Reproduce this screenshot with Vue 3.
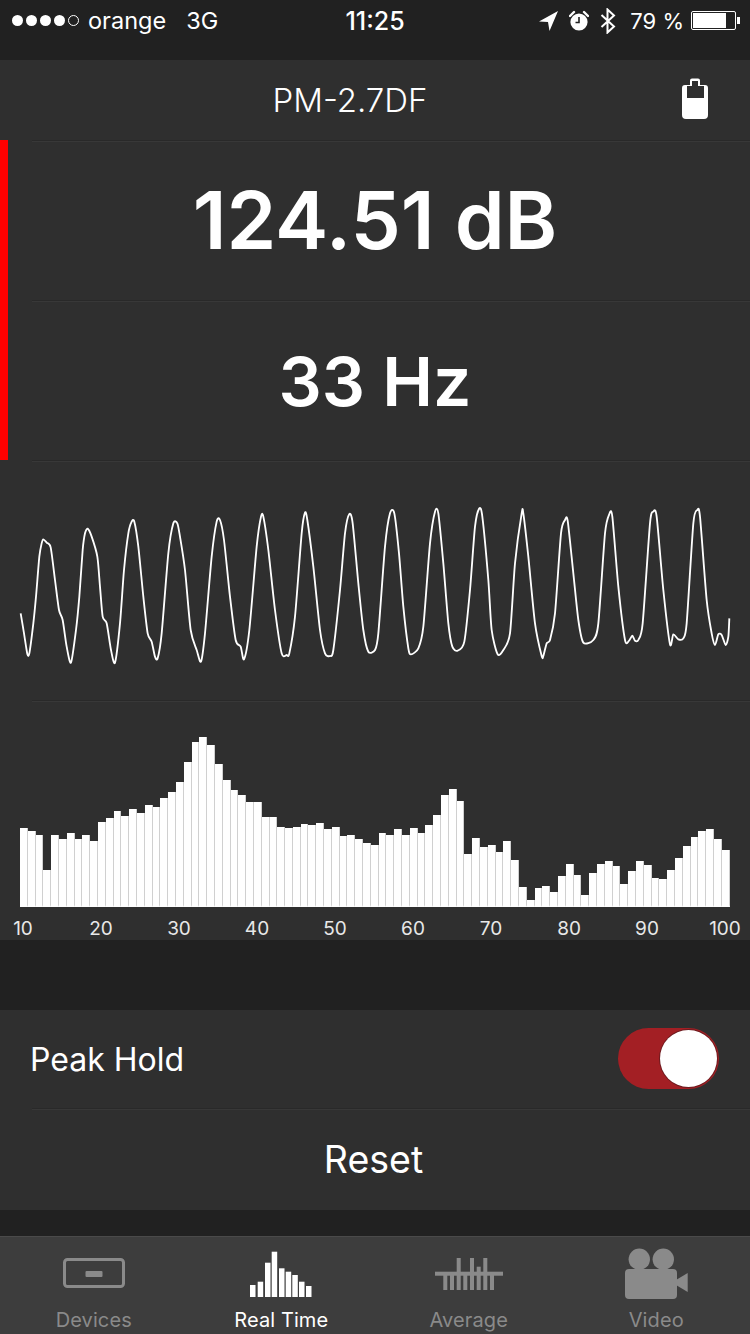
<template>
  <div class="page">
    <!-- status bar -->
    <div class="status-bar">
      <div class="status-left">
        <div class="dots">
          <i v-for="n in 4" :key="n" class="dot"></i>
          <i class="dot empty"></i>
        </div>
        <span class="carrier">orange</span>
        <span class="net">3G</span>
      </div>
      <div class="status-time">11:25</div>
      <div class="status-right">
        <svg class="ic-loc" width="19" height="20" viewBox="0 0 19 20">
          <path d="M19 0 L0 10.5 L9 11 L10.5 20 Z" fill="#fff" />
        </svg>
        <svg class="ic-alarm" width="20" height="22" viewBox="0 0 20 22">
          <circle cx="10" cy="12" r="8.6" fill="#fff" />
          <path d="M1 6 L5 2 M15 2 L19 6" stroke="#fff" stroke-width="2.4" stroke-linecap="round" />
          <path d="M10 7 V12.5 H6.5" stroke="#212121" stroke-width="1.6" fill="none" />
        </svg>
        <svg class="ic-bt" width="16" height="26" viewBox="0 0 16 26">
          <path d="M1.5 7 L14 18.5 L7.5 24.5 V1.5 L14 7.5 L1.5 19" stroke="#fff" stroke-width="2" fill="none" />
        </svg>
        <span class="batt-text">79 %</span>
        <div class="batt">
          <div class="batt-fill"></div>
        </div>
        <div class="batt-nub"></div>
      </div>
    </div>

    <!-- nav -->
    <div class="nav">
      <span class="nav-title">PM-2.7DF</span>
      <svg class="nav-batt" width="26" height="41" viewBox="0 0 26 41">
        <path d="M8 7 V2.5 Q8 0.5 10 0.5 H16 Q18 0.5 18 2.5 V7 H23 Q26 7 26 10 V37 Q26 41 22 41 H4 Q0 41 0 37 V10 Q0 7 3 7 Z" fill="#fff" />
        <rect x="5" y="8" width="17" height="12" fill="#2f2f2f" />
        <rect x="10" y="3" width="6" height="6" fill="#2f2f2f" />
      </svg>
    </div>

    <!-- readouts -->
    <div class="readouts">
      <div class="readout">
        <span class="level">124.51 dB</span>
      </div>
      <div class="readout">
        <span class="freq">33 Hz</span>
      </div>
    </div>

    <!-- waveform -->
    <div class="wave">
      <svg width="750" height="240" viewBox="0 -90 2250 720">
        <path :d="wavePath" fill="none" stroke="#fff" stroke-width="5.5" stroke-linejoin="round" />
      </svg>
    </div>

    <!-- spectrum -->
    <div class="spectrum">
      <div class="bars">
        <div
          v-for="(h, i) in barHeights"
          :key="i"
          class="bar"
          :style="{ height: h + 'px' }"
        ></div>
      </div>
      <div class="axis">
        <span v-for="l in axis" :key="l">{{ l }}</span>
      </div>
    </div>

    <div class="gap-a"></div>

    <!-- controls -->
    <div class="controls">
      <div class="row-peak">
        <span>Peak Hold</span>
        <div class="toggle">
          <div class="knob"></div>
        </div>
      </div>
      <div class="row-reset">Reset</div>
    </div>

    <div class="gap-b"></div>

    <!-- tab bar -->
    <div class="tabs">
      <div class="tab">
        <svg width="64" height="60" viewBox="0 0 64 60">
          <rect x="2.5" y="19.5" width="59" height="27" rx="3" fill="none" stroke="#8a8a8a" stroke-width="3" />
          <rect x="23.5" y="31" width="17" height="6" rx="1" fill="#8a8a8a" />
        </svg>
        <span>Devices</span>
      </div>
      <div class="tab active">
        <svg width="64" height="60" viewBox="0 0 64 60">
          <rect
            v-for="(b, i) in rtBars"
            :key="i"
            :x="b.x"
            :y="b.y"
            width="5.5"
            :height="57 - b.y"
            fill="#fff"
          />
        </svg>
        <span>Real Time</span>
      </div>
      <div class="tab">
        <svg width="70" height="60" viewBox="0 0 70 60">
          <rect
            v-for="(b, i) in avgBars"
            :key="i"
            :x="b.x"
            :y="b.y"
            width="4"
            :height="50 - b.y"
            fill="#8a8a8a"
          />
          <rect x="1" y="31.7" width="68" height="4" fill="#8a8a8a" />
        </svg>
        <span>Average</span>
      </div>
      <div class="tab">
        <svg width="64" height="60" viewBox="0 0 64 60">
          <circle cx="15.3" cy="19.3" r="10.7" fill="#8a8a8a" />
          <circle cx="39.3" cy="19.3" r="10.7" fill="#8a8a8a" />
          <rect x="1" y="29" width="52" height="30" rx="4" fill="#8a8a8a" />
          <path d="M52 40 L63.7 33 V52 L52 45 Z" fill="#8a8a8a" />
        </svg>
        <span>Video</span>
      </div>
    </div>
  </div>
</template>

<script setup>
import { computed } from 'vue'

// traced from the trace on screen, 3x units
const waveLeft = [
  [62,370],[72,430],[82,492],[88,490],[100,400],[108,320],[118,200],[125,160],[130,148],[140,158],[152,172],
  [165,270],[177,360],[188,390],[200,470],[213,518],[228,420],[238,320],[248,180],[255,130],[263,116],[275,140],
  [292,200],[300,290],[308,380],[320,400],[333,480],[345,518],[360,400],[372,240],[385,130],[395,95],[403,95],
  [415,170],[430,320],[443,430],[455,455],[465,500],[473,505],[485,430],[505,190],[520,100],[532,100],[540,140],
  [555,240],[572,420],[590,480],[603,515],[615,430],[635,200],[650,95],[660,90],[672,150],[690,320],[707,450],
  [722,470],[732,508],[748,420],[770,170],[783,80],[790,80],[805,180],[825,360],[845,490],[860,495],[868,490],
  [885,380],[905,130],[915,68],[922,90],[940,230],[960,420],[975,490],[990,498],[1000,480],[1020,300],[1035,130],
  [1048,72],[1058,100],[1075,280],[1090,420],[1105,485]
]
const waveRight = [
  [0,480],[10,430],[30,170],[45,70],[58,70],[72,190],[85,350],[100,475],[108,493],[130,475],[145,410],[165,160],
  [180,65],[190,70],[205,220],[220,400],[232,470],[248,482],[268,455],[285,300],[300,110],[313,55],[322,80],
  [340,270],[350,420],[368,493],[385,480],[405,430],[420,220],[440,70],[445,70],[460,200],[480,400],[500,498],
  [505,498],[515,460],[525,450],[540,370],[558,130],[570,90],[578,92],[595,250],[610,390],[625,458],[655,450],
  [670,400],[690,130],[703,72],[712,80],[730,290],[750,450],[762,452],[772,437],[780,452],[790,450],[803,400],
  [825,100],[835,65],[845,80],[865,300],[885,463],[895,433],[910,448],[925,445],[935,400],[955,100],[967,60],
  [975,80],[995,330],[1010,430],[1020,465],[1030,433],[1040,435],[1052,465],[1060,440],[1063,385]
]

// catmull-rom through the traced points so the peaks come out round
const wavePath = computed(() => {
  const pts = waveLeft.concat(waveRight.map(([x, y]) => [x + 1125, y]))
  const k = 8
  let d = `M${pts[0][0]} ${pts[0][1]}`
  for (let i = 0; i < pts.length - 1; i++) {
    const p0 = pts[i - 1] || pts[i]
    const p1 = pts[i]
    const p2 = pts[i + 1]
    const p3 = pts[i + 2] || p2
    const c1x = p1[0] + (p2[0] - p0[0]) / k
    const c1y = p1[1] + (p2[1] - p0[1]) / k
    const c2x = p2[0] - (p3[0] - p1[0]) / k
    const c2y = p2[1] - (p3[1] - p1[1]) / k
    d += ` C${c1x} ${c1y} ${c2x} ${c2y} ${p2[0]} ${p2[1]}`
  }
  return d
})

const barTops = [
  295,302,316,420,316,326,310,328,314,332,275,263,243,258,238,250,226,230,205,186,155,97,37,20,46,102,151,181,196,
  217,215,262,262,292,295,290,282,285,278,297,292,317,314,326,340,344,308,314,298,314,295,308,284,254,195,176,212,
  373,325,352,344,365,332,390,472,510,474,468,485,438,403,435,494,430,403,392,407,462,424,393,405,445,447,420,385,
  347,322,302,296,328,359
]
const barHeights = barTops.map(t => (531 - t) / 3)

const axis = [10, 20, 30, 40, 50, 60, 70, 80, 90, 100]

const rtBars = [
  { x: 1, y: 45 }, { x: 8.7, y: 41.7 }, { x: 16, y: 22.7 }, { x: 22.7, y: 11.7 }, { x: 30, y: 28.3 },
  { x: 36.7, y: 31.7 }, { x: 43.3, y: 35 }, { x: 50, y: 41.7 }, { x: 57, y: 46 }
]

const avgBars = [
  { x: 9.3, y: 33 }, { x: 16, y: 33 }, { x: 22.7, y: 18 }, { x: 29.3, y: 33 }, { x: 36, y: 18 },
  { x: 42.7, y: 26.7 }, { x: 49.3, y: 18 }, { x: 56, y: 33 }
]
</script>

<style scoped>
.page {
  width: 750px;
  height: 1334px;
  overflow: hidden;
  background: #2f2f2f;
  color: #fff;
  font-family: Inter, "Noto Sans", sans-serif;
  display: flex;
  flex-direction: column;
}

/* status bar */
.status-bar {
  height: 60px;
  flex: none;
  background: #212121;
  display: grid;
  grid-template-columns: 1fr auto 1fr;
  padding-bottom: 19px;
  box-sizing: border-box;
  align-items: center;
  font-size: 22px;
}

.status-left {
  display: flex;
  align-items: center;
  padding-left: 12px;
  font-size: 23.5px;
}

.dots {
  display: flex;
  gap: 3px;
  margin-right: 9px;
}

.dot {
  width: 11px;
  height: 11px;
  border-radius: 50%;
  background: #fff;
  box-sizing: border-box;
}

.dot.empty {
  background: none;
  border: 1px solid #fff;
}

.net {
  margin-left: 20px;
}

.status-time {
  font-size: 25px;
  font-weight: 500;
}

.status-right {
  display: flex;
  align-items: center;
  justify-content: flex-end;
  padding-right: 10px;
}

.ic-loc {
  margin-right: 11px;
}

.ic-alarm {
  margin-right: 11px;
}

.ic-bt {
  margin-right: 14px;
}

.batt-text {
  margin-right: 7px;
}

.batt {
  width: 45px;
  height: 19px;
  border: 1px solid #fff;
  border-radius: 2px;
  box-sizing: border-box;
  padding: 1px;
}

.batt-fill {
  width: 33px;
  height: 100%;
  background: #fff;
}

.batt-nub {
  width: 3px;
  height: 7px;
  background: #fff;
  margin-left: 1px;
}

/* nav */
.nav {
  height: 80px;
  flex: none;
  position: relative;
  display: flex;
  align-items: center;
  justify-content: center;
  padding-right: 50px;
  font-size: 33px;
  font-weight: 300;
}

.nav-batt {
  position: absolute;
  right: 42px;
  top: 18px;
}

/* readouts */
.readouts {
  border-left: 8px solid #f00;
  flex: none;
}

.readout {
  height: 160px;
  display: flex;
  align-items: center;
  justify-content: center;
  margin-left: 24px;
  border-top: 1px solid #292929;
  box-shadow: inset 0 1px 0 #383838;
  box-sizing: border-box;
}

.level,
.freq {
  margin-left: -32px;
  font-weight: 600;
}

.level {
  font-size: 80px;
  margin-bottom: 3px;
}

.freq {
  font-size: 68px;
}

/* waveform */
.wave {
  height: 240px;
  flex: none;
  margin-left: 32px;
  border-top: 1px solid #292929;
  box-shadow: inset 0 1px 0 #383838;
  box-sizing: border-box;
}

.wave svg {
  display: block;
  margin: -1px 0 0 -32px;
}

/* spectrum */
.spectrum {
  height: 240px;
  flex: none;
  position: relative;
  display: flex;
  flex-direction: column;
  justify-content: flex-end;
}

.spectrum::before,
.row-reset::before {
  content: "";
  position: absolute;
  top: 0;
  left: 32px;
  right: 0;
  border-top: 1px solid #292929;
  box-shadow: 0 1px 0 #383838;
}

.bars {
  height: 207px;
  margin: 0 20px;
  display: flex;
  align-items: flex-end;
}

.bar {
  flex: 1;
  background: #fff;
  border-right: 1px solid #d0d0d0;
  border-bottom: 2px solid #fff;
  box-sizing: border-box;
}

.axis {
  height: 33px;
  display: grid;
  grid-template-columns: repeat(10, 78px);
  margin-left: -16px;
  font-size: 19px;
  line-height: 43px;
  text-align: center;
  color: #e8e8e8;
}

.gap-a {
  height: 70px;
  flex: none;
  background: #212121;
}

/* controls */
.controls {
  flex: none;
  font-size: 32px;
}

.row-peak {
  height: 98px;
  padding: 0 31px 0 30px;
  display: flex;
  align-items: center;
  justify-content: space-between;
  box-sizing: border-box;
}

.toggle {
  width: 101px;
  height: 61px;
  border-radius: 31px;
  background: #a31f24;
  position: relative;
  margin-bottom: 1px;
}

.knob {
  position: absolute;
  right: 2px;
  top: 2px;
  width: 57px;
  height: 57px;
  border-radius: 50%;
  background: #fff;
  box-shadow: 0 0 0 1px #6e1a1e;
}

.row-reset {
  height: 102px;
  padding: 1px 3px 0 0;
  display: flex;
  align-items: center;
  justify-content: center;
  font-size: 37.5px;
  position: relative;
  box-sizing: border-box;
}

.gap-b {
  height: 26px;
  flex: none;
  background: #212121;
}

/* tabs */
.tabs {
  flex: 1;
  background: #3d3d3d;
  border-top: 1px solid #4a4a4a;
  display: grid;
  grid-template-columns: repeat(4, 1fr);
  box-sizing: border-box;
}

.tab {
  display: flex;
  flex-direction: column;
  align-items: center;
  padding-top: 3px;
  font-size: 20px;
  letter-spacing: 0.1px;
  line-height: 40px;
  color: #8a8a8a;
}

.tab svg {
  display: block;
  overflow: visible;
}

.tab.active {
  color: #fff;
}
</style>
